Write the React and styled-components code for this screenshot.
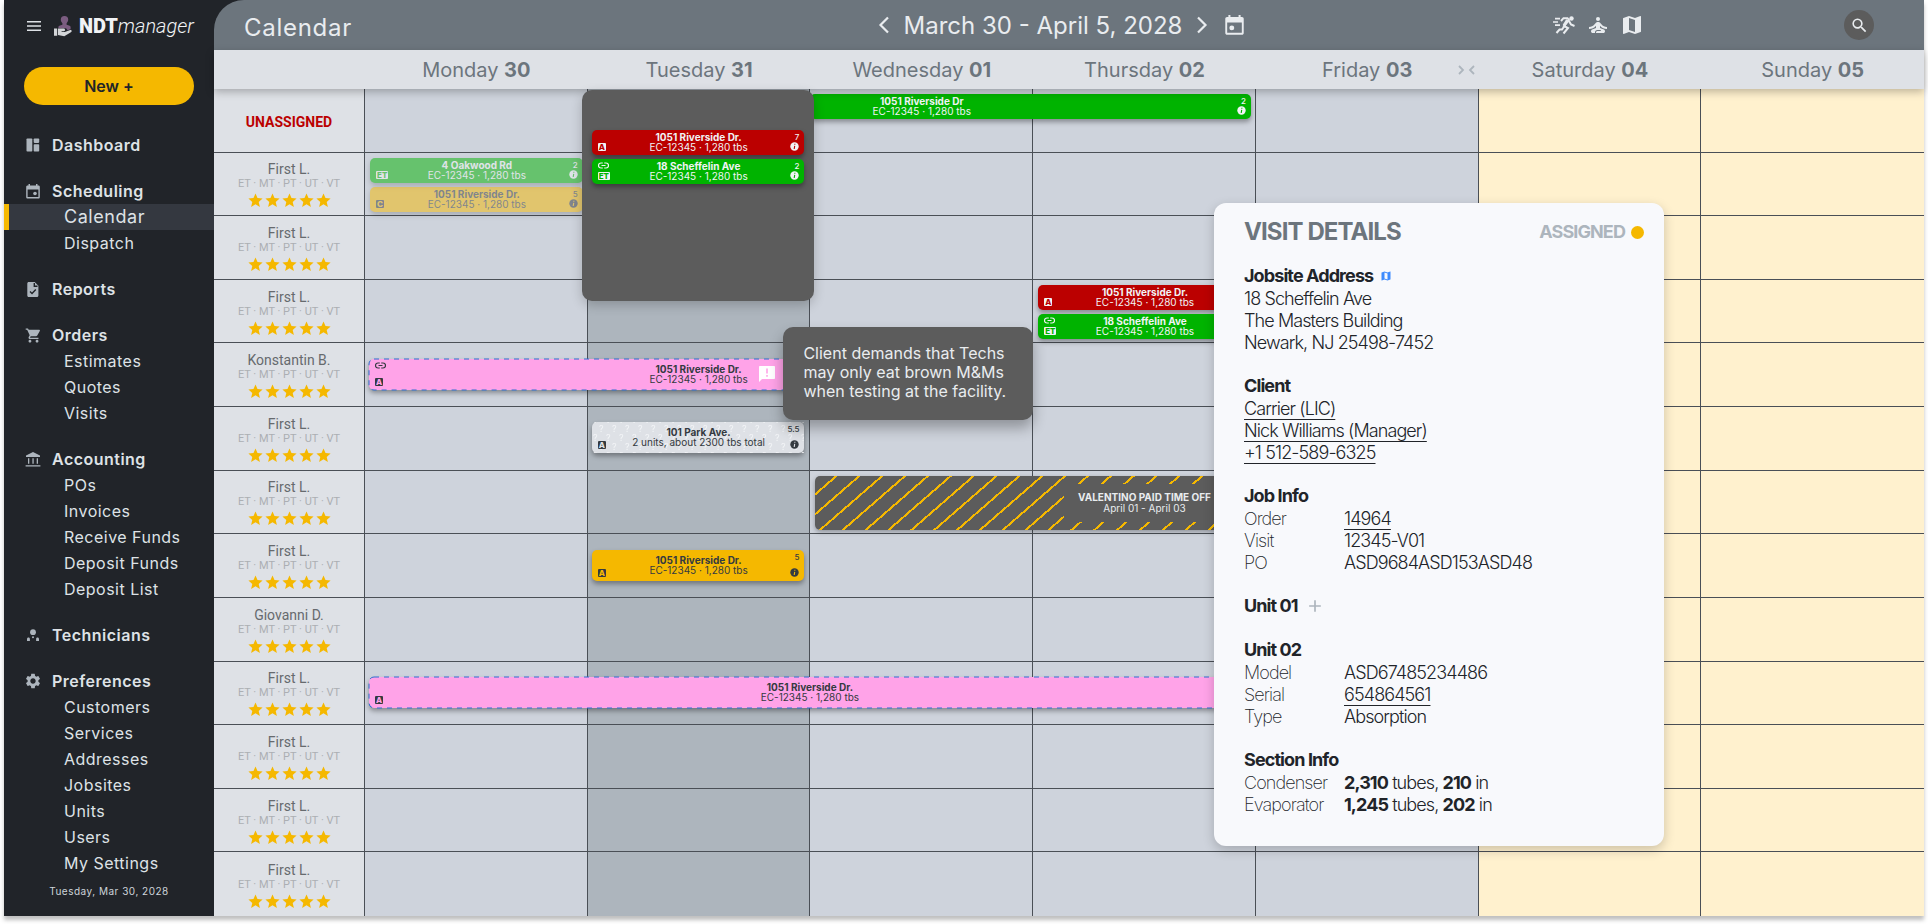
import React from 'react'
import styled, { createGlobalStyle, css } from 'styled-components'
import { MdAdd, MdMap, MdSearch, MdSelfImprovement, MdSettings, MdShoppingCart, MdStar } from 'react-icons/md'

const colors = {
  dark: '#212429',
  active: '#343840',
  header: '#6c757d',
  light: '#dee1e6',
  day: '#ced3dc',
  today: '#adb5bd',
  weekend: '#fff1ce',
  yellow: '#f5b800',
  green: '#00b300',
  red: '#bb0000',
  pink: '#ffa3e8',
  grey: '#5c5c5c',
  line: '#4a4f56',
  text: '#343a40',
}

/* ---------- icons ---------- */

const MenuIcon = () => (
  <svg width="14" height="12" viewBox="0 0 14 12" stroke="currentColor" strokeWidth="1.6">
    <path d="M0 1.7h14M0 6h14M0 10.3h14" />
  </svg>
)

const LogoIcon = () => (
  <svg width="18" height="21" viewBox="0 0 18 21">
    <path fill="#7b5c80" d="M10.5 0a3.7 3.7 0 0 1 3.7 3.8c0 1.5-1 2.6-1.6 3.4v1.6l3 1c.7.3 1 .8 1 1.5v1.9l-3.2 1c-.5-1.7-1.5-2-3-2H7.5l-3.1-.2v-1c0-.7.4-1 1-1.3l3-1V7.2C7.7 6.4 6.8 5.3 6.8 3.8A3.7 3.7 0 0 1 10.5 0z" />
    <path fill="#d3d5d8" d="M0 12.4h3.2v7.4H0zM4 12.6h5.5c1 0 1.6.7 1.6 1.4 0 .6-.5 1.2-1.2 1.2H7.6v.8h3.2l5.4-2c.9-.3 1.7.5 1.5 1.3-.1.4-.4.7-.8.9l-6.6 4-6.3-1.3z" />
  </svg>
)

const DashboardIcon = () => (
  <svg width="14" height="14" viewBox="0 0 14 14" fill="currentColor">
    <rect x="0.5" y="0.5" width="5.8" height="13" rx="0.8" />
    <rect x="7.7" y="0.5" width="5.5" height="4.4" rx="0.8" />
    <rect x="7.7" y="6.3" width="5.5" height="7.2" rx="0.8" />
  </svg>
)

const ScheduleIcon = ({ size = 14, dot = 9 }) => (
  <svg width={size} height={size * 15 / 14} viewBox="0 0 14 15">
    <path
      fill="currentColor"
      fillRule="evenodd"
      d="M2.5 0h1.5v1.5h6V0h1.5v1.5h1c.8 0 1.3.6 1.3 1.3v10.4c0 .8-.5 1.3-1.3 1.3h-11c-.7 0-1.3-.5-1.3-1.3V2.8c0-.7.6-1.3 1.3-1.3h1zM1.6 5.5v7.6h10.8V5.5z"
    />
    <circle cx={dot} cy="9.5" r="1.8" fill="currentColor" />
  </svg>
)

const ReportIcon = () => (
  <svg width="14" height="15" viewBox="0 0 14 15">
    <path fill="currentColor" d="M2.7 0h6l3.7 3.8v9.7c0 .8-.6 1.5-1.4 1.5H2.7c-.8 0-1.4-.7-1.4-1.5v-12C1.3.7 1.9 0 2.7 0z" />
    <path fill="none" stroke="#212429" strokeWidth="1.4" d="M8.3 1v3.2h3.2M4 9.6l2 1.9 3.8-4" />
  </svg>
)

const BankIcon = () => (
  <svg width="16" height="15" viewBox="0 0 16 15" fill="currentColor">
    <path d="M8 0l7 3.5v1.6H1V3.5zM3 6.2h1.3v5.6H3zM7.4 6.2h1.3v5.6H7.4zM11.7 6.2H13v5.6h-1.3zM.6 13.2h14.8v1.4H.6z" />
  </svg>
)

const TechIcon = () => (
  <svg width="12" height="12" viewBox="0 0 12 12" fill="currentColor">
    <circle cx="6" cy="3.2" r="2.9" />
    <path d="M0 12V10.2C0 9 .6 8.4 1.5 8.4s1.4.6 1.4 1.5V12zM12 12V10.2c0-1.2-.6-1.8-1.5-1.8s-1.4.6-1.4 1.5V12z" />
    <circle cx="6" cy="8.2" r="1" />
  </svg>
)

const Chevron = ({ flip }) => (
  <svg width="24" height="24" viewBox="0 0 24 24" fill="none" stroke="currentColor" strokeWidth="2.2">
    <path d={flip ? 'M8 4.5l7.5 7.5L8 19.5' : 'M16 4.5L8.5 12l7.5 7.5'} />
  </svg>
)

const SprintIcon = () => (
  <svg width="24" height="20" viewBox="0 0 24 20" fill="none" stroke="currentColor" strokeWidth="2">
    <path strokeWidth="1.7" d="M3 3.6h5M1 7h5M3 10.2h5" />
    <circle cx="19.5" cy="3.5" r="2.2" fill="currentColor" stroke="none" />
    <path d="M9 6l2.5-2.8h4L17 5l-5 6 4 2-4.5 5.5M12.5 11L10 14.5H7.5L4.5 18" />
    <path d="M17 6l2 3.5 3.5 1.5" />
    <path strokeWidth="3" d="M15.5 5l-3.5 5.5" />
  </svg>
)

const LinkIcon = () => (
  <svg width="11" height="7" viewBox="0 0 11 7" fill="none" stroke="currentColor" strokeWidth="1.2">
    <path d="M4.8 1H3a2.5 2.5 0 0 0 0 5h1.8M6.2 1H8a2.5 2.5 0 0 1 0 5H6.2M3.5 3.5h4" />
  </svg>
)

const InfoIcon = ({ hole }) => (
  <svg width="9" height="9" viewBox="0 0 9 9">
    <circle cx="4.5" cy="4.5" r="4.2" fill="currentColor" />
    <path stroke={hole} strokeWidth="1.1" d="M4.9 1.7L4.8 2.7M4.7 3.8L4.2 7" />
  </svg>
)

const NoteIcon = () => (
  <svg width="16" height="16" viewBox="0 0 16 16">
    <path fill="#fff" d="M1 0h14c.6 0 1 .4 1 1v11c0 .6-.4 1-1 1H3l-3 3V1c0-.6.4-1 1-1z" />
    <path stroke={colors.pink} strokeWidth="1.6" d="M8 2.5v5M8 9v1.7" />
  </svg>
)

const CollapseIcon = () => (
  <svg width="17" height="10" viewBox="0 0 17 10" fill="none" stroke="currentColor" strokeWidth="1.8">
    <path d="M1 1l4 4-4 4M16 1l-4 4 4 4" />
  </svg>
)

/* ---------- data ---------- */

const menu = [
  { name: 'Dashboard', icon: <DashboardIcon /> },
  { name: 'Scheduling', icon: <ScheduleIcon />, items: ['Calendar', 'Dispatch'] },
  { name: 'Reports', icon: <ReportIcon /> },
  { name: 'Orders', icon: <MdShoppingCart size={17} />, items: ['Estimates', 'Quotes', 'Visits'] },
  {
    name: 'Accounting',
    icon: <BankIcon />,
    items: ['POs', 'Invoices', 'Receive Funds', 'Deposit Funds', 'Deposit List'],
  },
  { name: 'Technicians', icon: <TechIcon /> },
  {
    name: 'Preferences',
    icon: <MdSettings size={18} />,
    items: ['Customers', 'Services', 'Addresses', 'Jobsites', 'Units', 'Users', 'My Settings'],
  },
]

const days = [
  ['Monday', '30'],
  ['Tuesday', '31'],
  ['Wednesday', '01'],
  ['Thursday', '02'],
  ['Friday', '03'],
  ['Saturday', '04'],
  ['Sunday', '05'],
]

const techs = [
  'First L.', 'First L.', 'First L.', 'Konstantin B.', 'First L.', 'First L.',
  'First L.', 'Giovanni D.', 'First L.', 'First L.', 'First L.', 'First L.',
]

const details = [
  {
    title: 'Job Info',
    rows: [
      ['Order', <a href="#order">14964</a>],
      ['Visit', '12345-V01'],
      ['PO', 'ASD9684ASD153ASD48'],
    ],
  },
  { title: 'Unit 01', closed: true, rows: [] },
  {
    title: 'Unit 02',
    rows: [
      ['Model', 'ASD67485234486'],
      ['Serial', <a href="#serial">654864561</a>],
      ['Type', 'Absorption'],
    ],
  },
  {
    title: 'Section Info',
    rows: [
      ['Condenser', <><b>2,310</b> tubes, <b>210</b> in</>],
      ['Evaporator', <><b>1,245</b> tubes, <b>202</b> in</>],
    ],
  },
]

/* ---------- parts ---------- */

const Visit = ({ color, light, title = '1051 Riverside Dr.', sub = 'EC-12345 · 1,280 tbs', hours, badge, linked, note, unknown, tall, dashed, faded, half }) => (
  <VisitCard $color={color} $light={light} $tall={tall} $faded={faded}>
    {unknown && (
      <Pattern aria-hidden="true">
        <defs>
          <pattern id="unknown" width="13" height="18" patternUnits="userSpaceOnUse">
            <text x="7" y="10">?</text>
            <text x="1" y="19">?</text>
            <text x="1" y="1">?</text>
          </pattern>
        </defs>
        <rect width="100%" height="100%" fill="url(#unknown)" />
      </Pattern>
    )}
    {dashed && (
      <Dashes aria-hidden="true">
        <rect width="100%" height="100%" rx="5" />
      </Dashes>
    )}
    <VisitSide>
      {linked ? <LinkIcon /> : <span />}
      {badge && <Badge $color={color} $light={light}>{badge}</Badge>}
    </VisitSide>
    <VisitText $half={half}>
      <strong>{title}</strong>
      <span>{sub}</span>
      {note && <NoteMark><NoteIcon /></NoteMark>}
    </VisitText>
    <VisitSide $right>
      <span>{hours}</span>
      {hours && <InfoIcon hole={color} />}
    </VisitSide>
  </VisitCard>
)

const App = () => {
  return (
    <Page>
      <GlobalStyle />
      <Sidebar>
        <Brand>
          <IconButton aria-label="Menu"><MenuIcon /></IconButton>
          <LogoIcon />
          <BrandName><b>NDT</b><i>manager</i></BrandName>
        </Brand>
        <NewButton>New +</NewButton>
        <Menu>
          {menu.map(e => (
            <MenuGroup key={e.name}>
              <MenuTitle href="#">
                <span>{e.icon}</span>
                {e.name}
              </MenuTitle>
              {e.items && e.items.map(name => (
                <MenuItem href="#" key={name} $active={name === 'Calendar'}>{name}</MenuItem>
              ))}
            </MenuGroup>
          ))}
        </Menu>
        <Today>Tuesday, Mar 30, 2028</Today>
      </Sidebar>

      <Content>
        <TopBar>
          <PageTitle>Calendar</PageTitle>
          <Week>
            <IconButton aria-label="Previous week"><Chevron /></IconButton>
            <span>March 30 - April 5, 2028</span>
            <IconButton aria-label="Next week"><Chevron flip /></IconButton>
            <IconButton aria-label="Pick a date"><ScheduleIcon size={19} dot={5} /></IconButton>
          </Week>
          <Tools>
            <ToolGroup>
              <IconButton aria-label="Busy"><SprintIcon /></IconButton>
              <IconButton aria-label="Free"><MdSelfImprovement size={24} /></IconButton>
              <IconButton aria-label="Map"><MdMap size={24} /></IconButton>
            </ToolGroup>
            <SearchButton aria-label="Search"><MdSearch size={19} /></SearchButton>
          </Tools>
        </TopBar>

        <DayBar>
          <span />
          {days.map(([name, date]) => (
            <DayName key={name}>
              {name}&nbsp;<b>{date}</b>
              {name === 'Friday' && <Collapse aria-label="Collapse weekend"><CollapseIcon /></Collapse>}
            </DayName>
          ))}
        </DayBar>

        <Board>
          <TechCell $row={1}><Unassigned>UNASSIGNED</Unassigned></TechCell>
          {techs.map((name, i) => (
            <TechCell key={i} $row={i + 2}>
              <TechName>{name}</TechName>
              <Skills>ET · MT · PT · UT · VT</Skills>
              <Stars>
                {[1, 2, 3, 4, 5].map(n => <MdStar key={n} size={17} />)}
              </Stars>
            </TechCell>
          ))}
          {Array.from({ length: 13 }).map((_, row) => (
            days.map(([name], col) => (
              <DayCell key={name + row} $row={row + 1} $col={col + 2} $kind={col > 4 ? 'weekend' : col === 1 ? 'today' : 'day'} />
            ))
          ))}

          <Slot $row={1} $col={4} $span={2} $flush>
            <Visit color={colors.green} light title="1051 Riverside Dr" hours="2" half />
          </Slot>
          <Slot $row={2} $col={2}>
            <Visit color={colors.green} light title="4 Oakwood Rd" hours="2" badge="ET" faded />
            <Visit color={colors.yellow} hours="5" badge="C" faded />
          </Slot>
          <Slot $row={4} $col={5}>
            <Visit color={colors.red} light hours="7" badge="A" />
            <Visit color={colors.green} light title="18 Scheffelin Ave" hours="2" badge="ET" linked />
          </Slot>
          <Slot $row={5} $col={2} $span={3} $center>
            <Visit color={colors.pink} badge="A" linked note tall dashed />
          </Slot>
          <Slot $row={6} $col={3} $center>
            <Visit color={colors.light} title="101 Park Ave." sub="2 units, about 2300 tbs total" hours="5.5" badge="A" tall unknown />
          </Slot>
          <Slot $row={7} $col={4} $span={3}>
            <TimeOff>
              <div>
                <strong>VALENTINO PAID TIME OFF</strong>
                <span>April 01 - April 03</span>
              </div>
            </TimeOff>
          </Slot>
          <Slot $row={8} $col={3} $center>
            <Visit color={colors.yellow} hours="5" badge="A" tall />
          </Slot>
          <Slot $row={10} $col={2} $span={4} $center>
            <Visit color={colors.pink} badge="A" tall dashed />
          </Slot>

          <Focus>
            <Visit color={colors.red} light hours="7" badge="A" />
            <Visit color={colors.green} light title="18 Scheffelin Ave" hours="2" badge="ET" linked />
          </Focus>

          <Note role="tooltip">
            Client demands that Techs<br />
            may only eat brown M&amp;Ms<br />
            when testing at the facility.
          </Note>

          <Details>
            <DetailsHead>
              <h2>VISIT DETAILS</h2>
              <Status>ASSIGNED</Status>
            </DetailsHead>
            <Section>
              <h3>Jobsite Address <MdMap size={12} color="#3d8bfd" /></h3>
              <p>18 Scheffelin Ave</p>
              <p>The Masters Building</p>
              <p>Newark, NJ 25498-7452</p>
            </Section>
            <Section>
              <h3>Client</h3>
              <p><a href="#client">Carrier (LIC)</a></p>
              <p><a href="#contact">Nick Williams (Manager)</a></p>
              <p><a href="#phone">+1 512-589-6325</a></p>
            </Section>
            {details.map(e => (
              <Section key={e.title}>
                <h3>
                  {e.title}
                  {e.closed && <IconButton aria-label="Show unit"><MdAdd size={20} color="#adb5bd" /></IconButton>}
                </h3>
                {e.rows.map(([label, value]) => (
                  <DetailRow key={label}>
                    <span>{label}</span>
                    <div>{value}</div>
                  </DetailRow>
                ))}
              </Section>
            ))}
          </Details>
        </Board>
      </Content>
    </Page>
  )
}

export default App

/* ---------- styles ---------- */

const GlobalStyle = createGlobalStyle`
  * {
    box-sizing: border-box;
  }
  body {
    margin: 0;
    padding: 0 4px 8px;
    background: #fff;
    font-family: Inter, "Liberation Sans", sans-serif;
  }
  a {
    color: inherit;
  }
  svg {
    display: block;
    flex: none;
  }
  h1, h2, h3, p {
    margin: 0;
  }
  button {
    font-family: inherit;
    cursor: pointer;
  }
`

const Page = styled.div`
  display: flex;
  min-height: calc(100vh - 8px);
  background: ${colors.dark};
  box-shadow: 0 4px 4px rgba(0, 0, 0, 0.25);
`

const IconButton = styled.button`
  display: flex;
  align-items: center;
  justify-content: center;
  padding: 0;
  border: 0;
  background: none;
  color: inherit;
`

const Sidebar = styled.aside`
  display: flex;
  flex-direction: column;
  flex: none;
  width: 210px;
  padding-top: 15px;
  color: #dee2e6;
`

const Brand = styled.div`
  display: flex;
  align-items: center;
  height: 22px;
  padding-left: 23px;
  > svg {
    margin-left: 13px;
  }
`

const BrandName = styled.div`
  margin-left: 7px;
  font-family: Roboto, sans-serif;
  font-size: 20px;
  color: #f1f3f5;
  b {
    font-weight: 900;
  }
  i {
    font-weight: 300;
  }
`

const NewButton = styled.button`
  height: 38px;
  margin: 30px 20px 27px;
  border: 0;
  border-radius: 19px;
  background: ${colors.yellow};
  color: ${colors.dark};
  font-size: 16px;
  font-weight: 600;
`

const Menu = styled.nav`
  display: flex;
  flex-direction: column;
  gap: 20px;
`

const MenuGroup = styled.div`
  display: flex;
  flex-direction: column;
`

const MenuTitle = styled.a`
  display: flex;
  align-items: center;
  padding-left: 20px;
  line-height: 26px;
  font-size: 16px;
  font-weight: 600;
  letter-spacing: 0.03em;
  text-decoration: none;
  span {
    display: flex;
    justify-content: center;
    width: 18px;
    margin-right: 10px;
    color: #adb5bd;
  }
`

const MenuItem = styled.a`
  padding-left: 60px;
  line-height: 26px;
  font-size: 16px;
  letter-spacing: 0.03em;
  text-decoration: none;
  ${p => p.$active && css`
    padding-left: 55px;
    border-left: 5px solid ${colors.yellow};
    background: ${colors.active};
    font-size: 18px;
  `}
`

const Today = styled.div`
  margin-top: 3px;
  text-align: center;
  line-height: 24px;
  font-size: 10px;
  letter-spacing: 0.05em;
  color: #ced4da;
`

const Content = styled.main`
  display: flex;
  flex-direction: column;
  flex: 1;
  min-width: 0;
`

const TopBar = styled.header`
  display: grid;
  grid-template-columns: 1fr auto 1fr;
  align-items: center;
  height: 50px;
  padding: 0 50px 0 30px;
  border-top-left-radius: 30px;
  background: ${colors.header};
  color: #e9ecef;
`

const PageTitle = styled.h1`
  padding-top: 4px;
  font-size: 24px;
  font-weight: 400;
  letter-spacing: 0.03em;
`

const Week = styled.div`
  display: flex;
  align-items: center;
  font-size: 24px;
  span {
    margin: 0 8px;
  }
  button:last-child {
    width: 24px;
    margin-left: 8px;
  }
`

const Tools = styled.div`
  display: flex;
  align-items: center;
  justify-content: flex-end;
  gap: 200px;
`

const ToolGroup = styled.div`
  display: flex;
  gap: 10px;
`

const SearchButton = styled(IconButton)`
  width: 30px;
  height: 30px;
  border-radius: 50%;
  background: ${colors.grey};
`

const columns = '151px repeat(7, minmax(0, 1fr))'

const DayBar = styled.div`
  position: relative;
  z-index: 1;
  display: grid;
  grid-template-columns: ${columns};
  height: 39px;
  background: ${colors.light};
  box-shadow: 0 3px 8px rgba(0, 0, 0, 0.25);
`

const DayName = styled.div`
  position: relative;
  display: flex;
  align-items: center;
  justify-content: center;
  font-size: 20px;
  color: ${colors.header};
`

const Collapse = styled(IconButton)`
  position: absolute;
  right: 4px;
  color: ${colors.today};
`

const Board = styled.div`
  position: relative;
  display: grid;
  flex: 1;
  grid-template-columns: ${columns};
  grid-template-rows: repeat(13, minmax(60px, 1fr));
`

const TechCell = styled.div`
  display: flex;
  flex-direction: column;
  align-items: center;
  justify-content: center;
  grid-column: 1;
  grid-row: ${p => p.$row};
  padding-top: 3px;
  border-right: 1px solid ${colors.line};
  border-bottom: ${p => p.$row === 13 ? 0 : 1}px solid ${colors.line};
  background: ${colors.light};
  font-family: Roboto, sans-serif;
`

const Unassigned = styled.div`
  font-size: 14px;
  font-weight: 700;
  color: ${colors.red};
`

const TechName = styled.div`
  line-height: 16px;
  font-size: 14px;
  color: #666a6e;
`

const Skills = styled.div`
  line-height: 14px;
  font-size: 11px;
  color: #acafb3;
`

const Stars = styled.div`
  display: flex;
  margin-top: 1px;
  color: ${colors.yellow};
`

const DayCell = styled.div`
  grid-column: ${p => p.$col};
  grid-row: ${p => p.$row};
  border-right: ${p => p.$col === 8 ? 0 : 1}px solid ${colors.line};
  border-bottom: ${p => p.$row === 13 ? 0 : 1}px solid ${colors.line};
  background: ${p => colors[p.$kind]};
`

const Slot = styled.div`
  display: flex;
  flex-direction: column;
  gap: 4px;
  align-self: start;
  grid-column: ${p => p.$col} / span ${p => p.$span || 1};
  grid-row: ${p => p.$row};
  margin: 5px 5px 0 ${p => p.$flush ? 0 : 5}px;
  ${p => p.$center && css`
    align-self: center;
    margin: 0 6px 2px 4px;
  `}
`

const VisitCard = styled.div`
  position: relative;
  display: flex;
  justify-content: space-between;
  height: ${p => p.$tall ? 31 : 25}px;
  padding: 3px 5px 4px 6px;
  border-radius: 5px;
  background: ${p => p.$color};
  color: ${p => p.$light ? '#f1f3f5' : colors.text};
  box-shadow: 0 3px 5px rgba(0, 0, 0, 0.35);
  opacity: ${p => p.$faded ? 0.5 : 1};
`

const Pattern = styled.svg`
  position: absolute;
  inset: 0;
  width: 100%;
  height: 100%;
  font-size: 9px;
  fill: #f3f5f7;
`

const Dashes = styled.svg`
  position: absolute;
  inset: 0;
  width: 100%;
  height: 100%;
  overflow: visible;
  fill: none;
  stroke: #2f6fd0;
  stroke-dasharray: 5 5;
`

const VisitSide = styled.div`
  position: relative;
  display: flex;
  flex-direction: column;
  justify-content: space-between;
  align-items: ${p => p.$right ? 'flex-end' : 'flex-start'};
  width: 24px;
  line-height: 9px;
  font-size: 8px;
  font-weight: 500;
`

const Badge = styled.span`
  padding: 0 1px;
  border-radius: 1px;
  background: ${p => p.$light ? '#f1f3f5' : colors.text};
  color: ${p => p.$color};
  line-height: 8px;
  font-size: 8px;
  font-weight: 800;
`

const VisitText = styled.div`
  position: relative;
  display: flex;
  flex-direction: column;
  align-self: center;
  align-items: center;
  line-height: 10px;
  font-size: 10px;
  white-space: nowrap;
  ${p => p.$half && css`
    width: 50%;
    margin-right: auto;
    margin-left: -26px;
  `}
`

const NoteMark = styled.span`
  position: absolute;
  top: 2px;
  left: calc(100% + 11px);
`

const TimeOff = styled.div`
  display: flex;
  align-items: center;
  justify-content: center;
  height: 54px;
  border-radius: 5px;
  background: repeating-linear-gradient(139deg, ${colors.grey} 0 13px, ${colors.yellow} 13px 15px);
  box-shadow: 0 2px 5px rgba(0, 0, 0, 0.3);
  color: #e9ecef;
  line-height: 11px;
  font-size: 10px;
  div {
    display: flex;
    flex-direction: column;
    align-items: center;
    padding: 8px 14px;
    background: ${colors.grey};
  }
`

const Focus = styled.div`
  z-index: 2;
  display: flex;
  flex-direction: column;
  gap: 4px;
  align-self: start;
  grid-column: 3;
  grid-row: 1 / span 4;
  min-height: 211px;
  margin: 1px -4px 0 -6px;
  padding: 40px 10px;
  border-radius: 10px;
  background: ${colors.grey};
  box-shadow: 0 4px 12px rgba(0, 0, 0, 0.2);
`

const Note = styled.div`
  z-index: 2;
  align-self: start;
  grid-column: 4;
  grid-row: 4 / span 3;
  width: 250px;
  margin: 47px 0 0 -27px;
  padding: 17px 20px 19px;
  border-radius: 10px;
  background: ${colors.grey};
  box-shadow: 0 8px 14px rgba(0, 0, 0, 0.3);
  color: #e9ecef;
  line-height: 19px;
  font-size: 16px;
  white-space: nowrap;
`

const Details = styled.section`
  position: absolute;
  z-index: 3;
  top: 114px;
  right: 260px;
  display: flex;
  flex-direction: column;
  gap: 21px;
  width: 450px;
  padding: 17px 20px 30px 30px;
  border-radius: 12px;
  background: #f8f9fc;
  box-shadow: 0 4px 12px rgba(0, 0, 0, 0.2);
  color: ${colors.dark};
  line-height: 22px;
  font-size: 18px;
  font-weight: 300;
  letter-spacing: -0.05em;
  b {
    font-weight: 700;
  }
  a {
    text-decoration: underline 1px;
    text-decoration-skip-ink: none;
    text-underline-offset: 4px;
  }
`

const DetailsHead = styled.div`
  display: flex;
  align-items: center;
  justify-content: space-between;
  line-height: 24px;
  color: ${colors.header};
  h2 {
    font-size: 24px;
    font-weight: 700;
  }
`

const Status = styled.div`
  display: flex;
  align-items: center;
  gap: 6px;
  font-weight: 700;
  color: ${colors.today};
  &::after {
    content: '';
    width: 13px;
    height: 13px;
    border-radius: 50%;
    background: ${colors.yellow};
  }
`

const Section = styled.div`
  h3 {
    display: flex;
    align-items: center;
    gap: 7px;
    height: 22px;
    margin-bottom: 1px;
    font-size: 18px;
    font-weight: 700;
  }
`

const DetailRow = styled.div`
  display: flex;
  span {
    width: 100px;
    font-weight: 200;
  }
`
